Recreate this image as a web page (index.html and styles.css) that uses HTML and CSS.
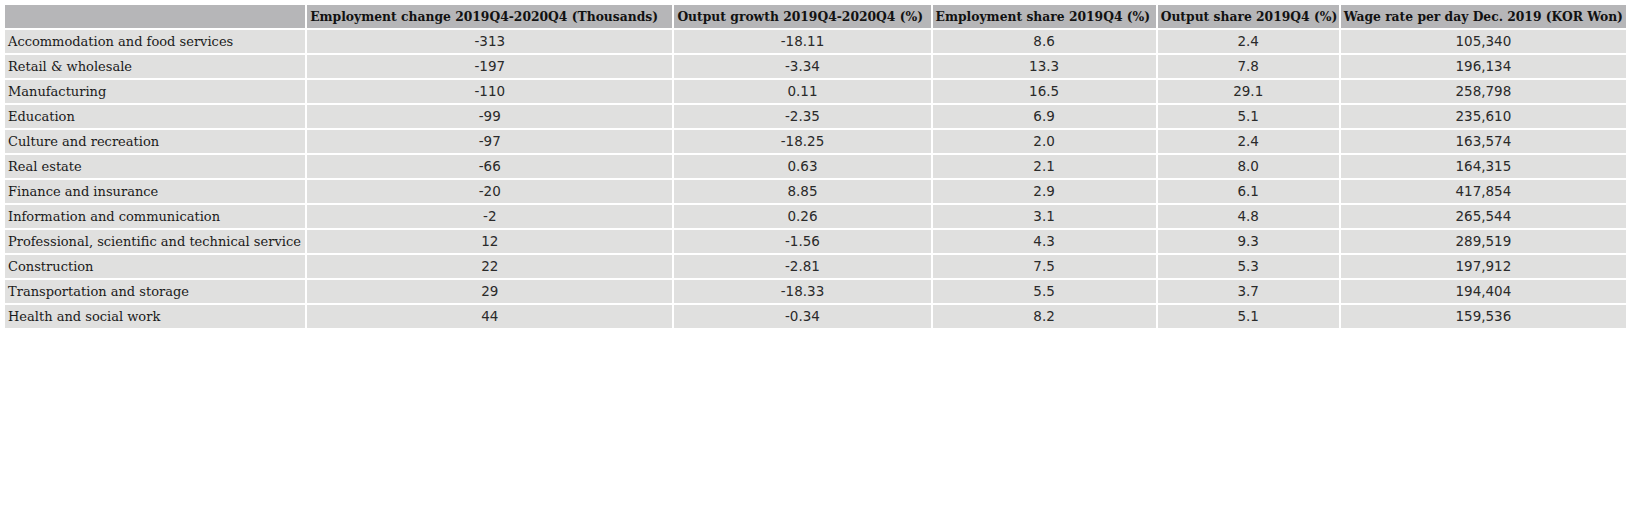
FILE: index.html
```html
<!DOCTYPE html>
<html>
<head>
<meta charset="utf-8">
<link rel="stylesheet" href="styles.css">
</head>
<body>
<table class="data">
  <colgroup>
    <col class="c1"><col class="c2"><col class="c3"><col class="c4"><col class="c5"><col class="c6">
  </colgroup>
  <thead>
    <tr>
      <th></th>
      <th>Employment change 2019Q4-2020Q4 (Thousands)</th>
      <th>Output growth 2019Q4-2020Q4 (%)</th>
      <th>Employment share 2019Q4 (%)</th>
      <th>Output share 2019Q4 (%)</th>
      <th>Wage rate per day Dec. 2019 (KOR Won)</th>
    </tr>
  </thead>
  <tbody>
    <tr><td class="lbl">Accommodation and food services</td><td>-313</td><td>-18.11</td><td>8.6</td><td>2.4</td><td>105,340</td></tr>
    <tr><td class="lbl">Retail &amp; wholesale</td><td>-197</td><td>-3.34</td><td>13.3</td><td>7.8</td><td>196,134</td></tr>
    <tr><td class="lbl">Manufacturing</td><td>-110</td><td>0.11</td><td>16.5</td><td>29.1</td><td>258,798</td></tr>
    <tr><td class="lbl">Education</td><td>-99</td><td>-2.35</td><td>6.9</td><td>5.1</td><td>235,610</td></tr>
    <tr><td class="lbl">Culture and recreation</td><td>-97</td><td>-18.25</td><td>2.0</td><td>2.4</td><td>163,574</td></tr>
    <tr><td class="lbl">Real estate</td><td>-66</td><td>0.63</td><td>2.1</td><td>8.0</td><td>164,315</td></tr>
    <tr><td class="lbl">Finance and insurance</td><td>-20</td><td>8.85</td><td>2.9</td><td>6.1</td><td>417,854</td></tr>
    <tr><td class="lbl">Information and communication</td><td>-2</td><td>0.26</td><td>3.1</td><td>4.8</td><td>265,544</td></tr>
    <tr><td class="lbl">Professional, scientific and technical service</td><td>12</td><td>-1.56</td><td>4.3</td><td>9.3</td><td>289,519</td></tr>
    <tr><td class="lbl">Construction</td><td>22</td><td>-2.81</td><td>7.5</td><td>5.3</td><td>197,912</td></tr>
    <tr><td class="lbl">Transportation and storage</td><td>29</td><td>-18.33</td><td>5.5</td><td>3.7</td><td>194,404</td></tr>
    <tr><td class="lbl">Health and social work</td><td>44</td><td>-0.34</td><td>8.2</td><td>5.1</td><td>159,536</td></tr>
  </tbody>
</table>
</body>
</html>
```
FILE: styles.css
```css
html, body {
  background: #ffffff;
}
body {
  margin: 3px;
  color: #111111;
}
.data {
  width: 1625px;
  border-collapse: separate;
  border-spacing: 2px;
  table-layout: fixed;
}
.c1 { width: 300px; }
.c2 { width: 365px; }
.c3 { width: 256px; }
.c4 { width: 223px; }
.c5 { width: 181px; }
.c6 { width: 285px; }
.data th {
  background: #b6b6b8;
  font-family: "DejaVu Serif Condensed", "DejaVu Serif", serif;
  font-weight: bold;
  font-size: 13.7px;
  line-height: 17px;
  height: 23px;
  padding: 0 3px;
  text-align: left;
  white-space: nowrap;
  overflow: hidden;
  box-sizing: border-box;
}
.data td {
  background: #e0e0df;
  color: #2a2a2a;
  font-family: "DejaVu Sans", sans-serif;
  font-size: 13.5px;
  line-height: 17px;
  height: 23px;
  padding: 0 3px;
  text-align: center;
  white-space: nowrap;
  box-sizing: border-box;
}
.data td.lbl {
  color: #1a1a1a;
  font-family: "DejaVu Serif", serif;
  font-size: 13px;
  text-align: left;
}
```
